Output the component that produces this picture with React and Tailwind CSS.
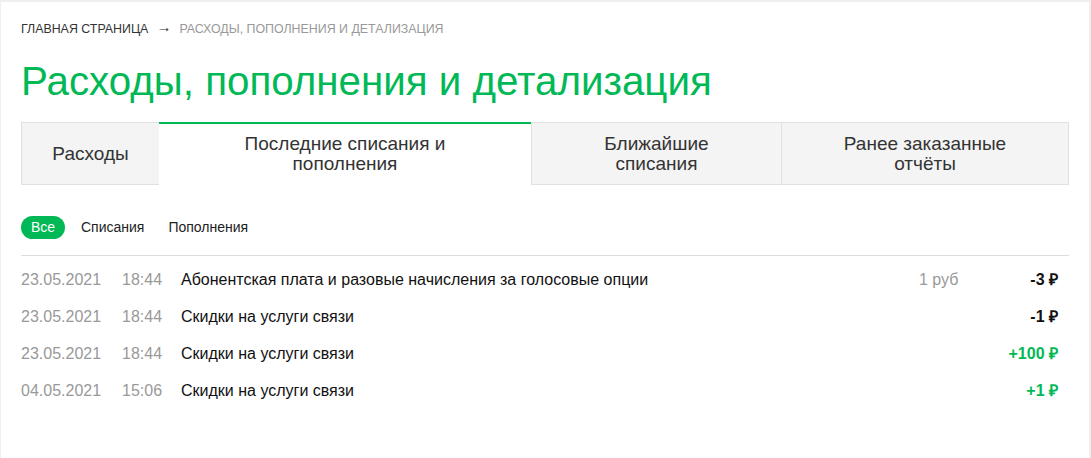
import React from "react";

const rows = [
  { d: "23.05.2021", t: "18:44", text: "Абонентская плата и разовые начисления за голосовые опции", extra: "1 руб", amt: "-3 ₽", plus: false },
  { d: "23.05.2021", t: "18:44", text: "Скидки на услуги связи", extra: "", amt: "-1 ₽", plus: false },
  { d: "23.05.2021", t: "18:44", text: "Скидки на услуги связи", extra: "", amt: "+100 ₽", plus: true },
  { d: "04.05.2021", t: "15:06", text: "Скидки на услуги связи", extra: "", amt: "+1 ₽", plus: true },
];

export default function App() {
  return (
    <div className="w-[1091px] h-[458px] bg-[#efefef] pt-[2px] pl-[1px] pr-[2px] overflow-hidden" style={{ fontFamily: '"Liberation Sans", Arial, sans-serif' }}>
      <div className="bg-white h-full px-[20px]">
        <div className="pt-[19px] flex items-center text-[12.4px] leading-[16px] uppercase">
          <span className="text-[#333]">Главная страница</span>
          <span className="ml-[8px] mr-[8px] text-[#333] text-[15px] leading-[16px] -translate-y-[2px]">→</span>
          <span className="text-[#999]">Расходы, пополнения и детализация</span>
        </div>
        <h1 className="mt-[21px] text-[40.3px] leading-[48px] text-[#00b956] font-normal">Расходы, пополнения и детализация</h1>
        <div className="mt-[16px] w-[1048px] grid grid-cols-[138px_372px_251px_287px] h-[63px] text-[19px] leading-[20px] text-[#333] text-center">
          <div className="bg-[#f4f4f4] border border-[#e0e0e0] border-r-0 flex items-center justify-center">Расходы</div>
          <div className="bg-white border-t-[2px] border-[#00b956] flex items-center justify-center px-[60px] pb-[2px]">Последние списания и пополнения</div>
          <div className="bg-[#f4f4f4] border border-[#e0e0e0] flex items-center justify-center px-[60px]">Ближайшие списания</div>
          <div className="bg-[#f4f4f4] border border-[#e0e0e0] border-l-0 flex items-center justify-center px-[60px]">Ранее заказанные отчёты</div>
        </div>
        <div className="mt-[31px] flex items-center text-[14px] text-[#222]">
          <span className="bg-[#00b956] text-white rounded-full h-[23px] w-[44px] flex items-center justify-center">Все</span>
          <span className="ml-[16px]">Списания</span>
          <span className="ml-[24px]">Пополнения</span>
        </div>
        <div className="mt-[16px] w-[1048px] border-t border-[#dcdcdc]" />
        <div className="w-[1048px] pt-[5px]">
          {rows.map((r, i) => (
            <div key={i} className="flex items-center h-[37px] text-[16px]">
              <span className="w-[101px] text-[#999]">{r.d}</span>
              <span className="w-[59px] text-[#999]">{r.t}</span>
              <span className="flex-1 text-[#111]">{r.text}</span>
              <span className="w-[60px] text-[#999]">{r.extra}</span>
              <span className={"w-[90px] text-right pr-[11px] font-bold " + (r.plus ? "text-[#00b956]" : "text-[#111]")}>{r.amt}</span>
            </div>
          ))}
        </div>
      </div>
    </div>
  );
}
